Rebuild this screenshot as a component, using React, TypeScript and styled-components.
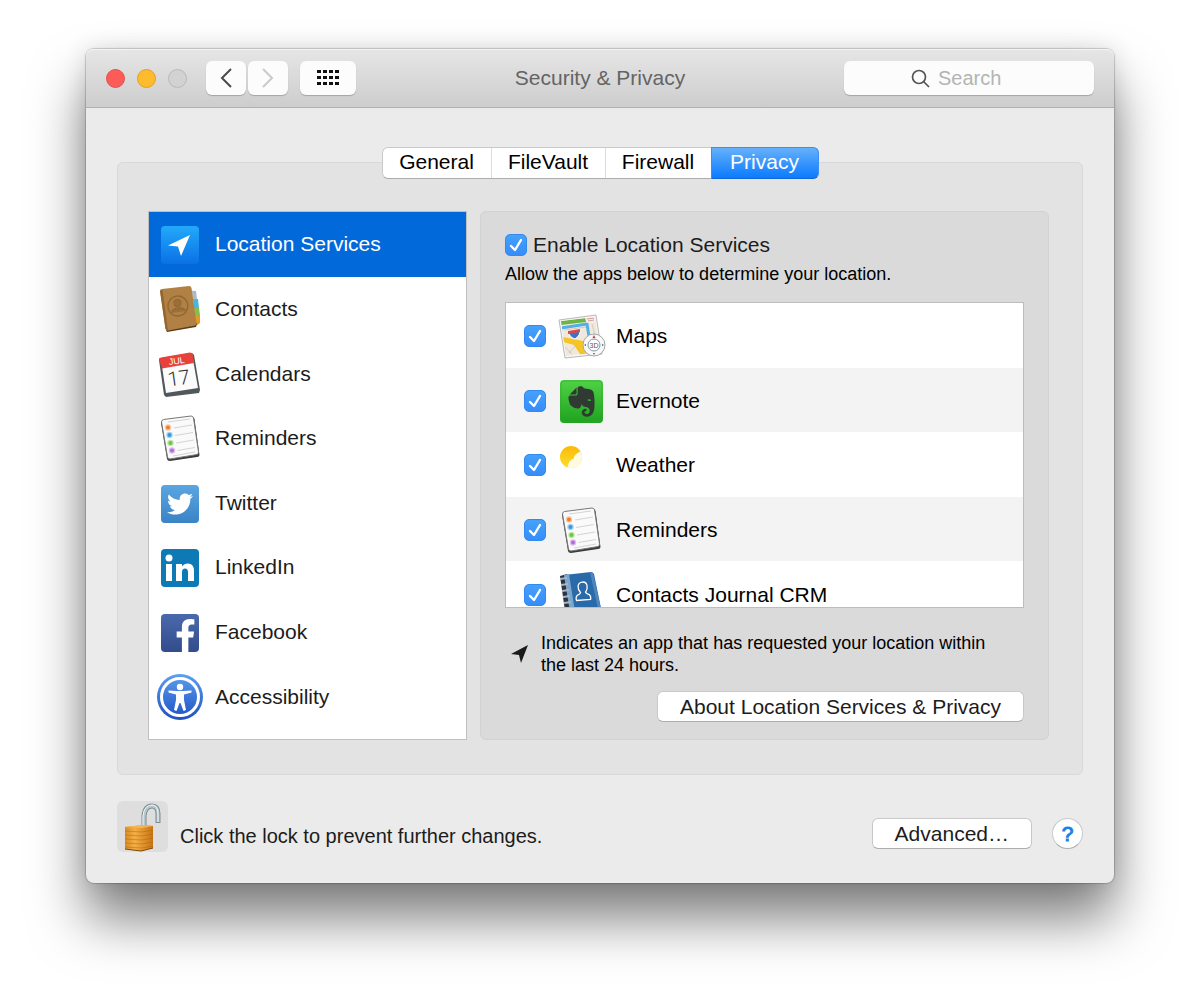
import React, { useState } from 'react';
import styled, { createGlobalStyle, css } from 'styled-components';
import { FaTwitter, FaLinkedinIn, FaFacebookF, FaEvernote } from 'react-icons/fa';

const GlobalStyle = createGlobalStyle`
  *, *::before, *::after { box-sizing: border-box; }
  body {
    margin: 0;
    background: #fff;
    color: #1c1c1c;
    font-family: "Liberation Sans", Arial, Helvetica, sans-serif;
    font-size: 21px;
    line-height: 24px;
  }
  button, input { font: inherit; color: inherit; }
`;

const Desktop = styled.main`
  padding: 49px 86px 123px;
`;

const Window = styled.section`
  border-radius: 8px;
  background: #ebebeb;
  box-shadow: 0 0 1px 1px rgba(0, 0, 0, 0.18), 0 36px 54px rgba(0, 0, 0, 0.5), 0 0 24px rgba(0, 0, 0, 0.12);
`;

const Toolbar = styled.header`
  display: grid;
  grid-template-columns: 1fr auto 1fr;
  align-items: center;
  height: 59px;
  padding: 0 20px;
  border-bottom: 1px solid #b0b0b0;
  border-radius: 8px 8px 0 0;
  background: linear-gradient(#e6e6e6, #cdcdcd);
  box-shadow: inset 0 1px 0 #f4f4f4;
`;

const ToolbarStart = styled.div`
  display: flex;
  align-items: center;
`;

const TrafficLights = styled.div`
  display: flex;
  gap: 12px;
  margin-right: 19px;
`;

const Light = styled.button<{ $fill: string; $edge: string }>`
  width: 19px;
  height: 19px;
  padding: 0;
  border: 1px solid ${(p) => p.$edge};
  border-radius: 50%;
  background: ${(p) => p.$fill};
`;

const ToolButton = styled.button<{ $wide?: boolean }>`
  display: grid;
  place-items: center;
  width: ${(p) => (p.$wide ? 56 : 40)}px;
  height: 34px;
  margin-left: ${(p) => (p.$wide ? 12 : 0)}px;
  padding: 0;
  border: 0;
  border-radius: 6px;
  background: #fcfcfc;
  box-shadow: 0 1px 1px rgba(0, 0, 0, 0.22);
`;

const NavButtons = styled.div`
  display: flex;
  gap: 2px;
`;

const Title = styled.h1`
  margin: 0;
  color: #646464;
  font-size: 21px;
  font-weight: 400;
`;

const SearchField = styled.label`
  display: flex;
  align-items: center;
  justify-self: end;
  gap: 8px;
  width: 250px;
  height: 34px;
  padding-left: 67px;
  border-radius: 6px;
  background: #fcfcfc;
  box-shadow: 0 1px 1px rgba(0, 0, 0, 0.22);
`;

const SearchInput = styled.input`
  flex: 1;
  min-width: 0;
  padding: 0;
  border: 0;
  outline: 0;
  background: none;
  font-size: 20px;
  &::placeholder { color: #b4b4b4; opacity: 1; }
`;

const Content = styled.div`
  padding: 39px 31px 31px;
`;

const raised = css`
  border: 1px solid #c9c9c9;
  border-bottom-color: #adadad;
  border-radius: 6px;
  background: #fff;
`;

const Tabs = styled.div`
  position: relative;
  display: flex;
  width: fit-content;
  height: 32px;
  margin: 0 auto -17px;
  ${raised}
`;

const Tab = styled.button<{ $width: number }>`
  width: ${(p) => p.$width}px;
  padding: 0 0 2px;
  border: 0;
  border-right: 1px solid #dcdcdc;
  background: none;
  color: #000;
  &[aria-selected='true'] {
    margin: -1px;
    border: 1px solid #3c8df5;
    border-bottom-color: #1267d8;
    border-radius: 0 6px 6px 0;
    background: linear-gradient(#66b0fb, #0a7bff);
    color: #fff;
  }
`;

const GroupBox = styled.div`
  display: grid;
  grid-template-columns: 319fr 569fr;
  gap: 13px;
  padding: 48px 33px 34px 30px;
  border: 1px solid #d8d8d8;
  border-radius: 6px;
  background: #e3e3e3;
`;

const Sidebar = styled.nav`
  display: grid;
  grid-template-rows: repeat(8, 1fr);
  padding-bottom: 10px;
  border: 1px solid #c0c0c0;
  background: #fff;
`;

const Category = styled.button`
  display: flex;
  align-items: center;
  gap: 12px;
  padding: 0 8px;
  border: 0;
  background: none;
  text-align: left;
  &[aria-current='true'] {
    background: #0269db;
    color: #fff;
  }
`;

const Panel = styled.div`
  display: flex;
  flex-direction: column;
  padding: 22px 24px 17px;
  border: 1px solid #d2d2d2;
  border-radius: 6px;
  background: #dadada;
`;

const EnableRow = styled.label`
  display: flex;
  align-items: center;
  gap: 6px;
  height: 22px;
`;

const Hint = styled.p`
  margin: 7px 0 17px;
  color: #000;
  font-size: 18px;
  line-height: 22px;
`;

const AppScroller = styled.div`
  height: 306px;
  overflow: hidden;
  border: 1px solid #bdbdbd;
  background: #fff;
`;

const AppList = styled.ul`
  display: grid;
  grid-template-rows: repeat(5, 1fr);
  height: 323px;
  margin: 0;
  padding: 0;
  list-style: none;
`;

const AppItem = styled.li`
  display: grid;
  color: #000;
  &:nth-child(even) { background: #f3f3f3; }
`;

const AppLabel = styled.label`
  display: flex;
  align-items: center;
  gap: 12px;
  padding: 2px 18px 0;
`;

const CheckFrame = styled.span`
  display: grid;
  flex: none;
  width: 22px;
  height: 22px;
  & > * { grid-area: 1 / 1; }
  svg { pointer-events: none; }
`;

const CheckInput = styled.input`
  appearance: none;
  width: 22px;
  height: 22px;
  margin: 0;
  border: 1px solid #b5b5b5;
  border-radius: 5px;
  background: #fff;
  &:checked {
    border-color: #3489ee;
    background: linear-gradient(#45a1fb, #368dfa);
  }
`;

const Note = styled.div`
  display: flex;
  align-items: center;
  gap: 12px;
  margin: 24px 0 15px;
  padding-left: 5px;
  color: #000;
  font-size: 18px;
  line-height: 22px;
  svg { flex: none; }
`;

const NoteText = styled.p`
  max-width: 465px;
  margin: 0;
`;

const PushButton = styled.button`
  height: 31px;
  padding: 0 22px;
  ${raised}
`;

const AboutButton = styled(PushButton)`
  align-self: flex-end;
`;

const Footer = styled.footer`
  display: flex;
  align-items: center;
  gap: 12px;
  margin-top: 26px;
`;

const LockButton = styled.button`
  width: 51px;
  height: 51px;
  padding: 0;
  border: 0;
  border-radius: 6px;
  background: #dedede;
  svg { display: block; }
`;

const LockText = styled.p`
  flex: 1;
  margin: 0;
  padding-top: 18px;
  font-size: 20px;
`;

const FooterActions = styled.div`
  display: flex;
  align-items: center;
  gap: 20px;
  padding-top: 14px;
`;

const HelpButton = styled.button`
  width: 31px;
  height: 31px;
  padding: 0;
  ${raised}
  border-radius: 50%;
  color: #1b7fe6;
  -webkit-text-stroke: 1px #1b7fe6;
`;

const Glyph46 = styled.svg`
  flex: none;
  overflow: visible;
`;

const Icon = ({ children }: { children: React.ReactNode }) => (
  <Glyph46 width="46" height="46" viewBox="0 0 46 46" aria-hidden="true">{children}</Glyph46>
);

const LocationIcon = () => (
  <Icon>
    <defs>
      <linearGradient id="loc" x2="0" y2="1"><stop stopColor="#22a9fa" /><stop offset="1" stopColor="#0a70e6" /></linearGradient>
    </defs>
    <rect x="4" y="5" width="38" height="38" rx="4" fill="url(#loc)" />
    <path d="M33 14 11 24.500 21 25.500 24 35Z" fill="#fff" />
  </Icon>
);

const ContactsIcon = () => (
  <Icon>
    <path d="M34 4 39 5 43 36 38 40Z" fill="#e2e2e2" />
    <path d="M35 5h4l1 9h-4z" fill="#a9bcc6" />
    <path d="M36 13h5l1 9h-5z" fill="#4db6d8" />
    <path d="M37 22h5l1 7h-5z" fill="#83bf4b" />
    <path d="M38 29h5v8l-4 3z" fill="#e39a25" />
    <path d="M9 44 40 37 39 41 10 46Z" fill="#5c3e17" />
    <path d="M3 4.500Q3 3 5 3L32 0Q34 0 34.500 2L39.500 37Q39.500 39 38 39.500L11 44.500Q9 44.500 8.500 43Z" fill="#b08044" />
    <path d="M3 5 8.500 43 11 44.500 5.500 4Z" fill="#93662f" />
    <g fill="none" stroke="#916631" transform="rotate(-7 21 21)">
      <circle cx="21" cy="20" r="10" strokeWidth="1.300" />
      <circle cx="21" cy="17" r="3.500" fill="#9b6f36" />
      <path d="M14 26Q15 22 21 22T28 26" fill="#9b6f36" />
    </g>
  </Icon>
);

const CalendarIcon = () => (
  <Icon>
    <path d="M2 9Q2 7 4 7L34 2Q36 2 37 4L43 39 42 42 9 46 7 44Z" fill="#50585c" />
    <path d="M4 9 35 3 41 37 9 42Z" fill="#fbfbfb" />
    <path d="M2 8Q2 7 4 6.500L33 1.500Q35 1.500 35.500 3L37 12 5 17.500Z" fill="#e8413c" />
    <text x="20" y="13" transform="rotate(-8 20 12)" textAnchor="middle" fontSize="9" fill="#fff">JUL</text>
    <text x="22" y="34" transform="rotate(-8 22 28)" textAnchor="middle" fontSize="20" fontFamily="Roboto, sans-serif" fontWeight="300" fill="#333">17</text>
  </Icon>
);

const RemindersIcon = () => (
  <Icon>
    <path d="M4 8Q4 6 6 6L35 2Q37 2 37.500 4L42.500 40Q42.500 42 40 42L13 46Q10.500 46 10 44Z" fill="#3b3b3b" />
    <path d="M4.500 7Q4.500 5 6.500 4.500L34 1Q36 1 36.500 3L41.500 37Q41.500 39 40 39.500L13 44Q11 44 10.500 42Z" fill="#fafafa" stroke="#777" />
    <g stroke="#d4d4d4">
      <path d="M11 7 33 4M17 13 35 10M18 20.500 36 17.500M19 28 37 25M20.500 35.500 38 32.500M16 41 38 37" />
    </g>
    <g strokeWidth="2.500" strokeOpacity=".4">
      <circle cx="11" cy="12.500" r="2" fill="#ef7f2d" stroke="#ef7f2d" />
      <circle cx="12.500" cy="20" r="2" fill="#2f9be0" stroke="#2f9be0" />
      <circle cx="13.500" cy="28" r="2" fill="#6cc83d" stroke="#6cc83d" />
      <circle cx="15" cy="35.500" r="2" fill="#b56bdc" stroke="#b56bdc" />
    </g>
  </Icon>
);

const TwitterIcon = () => (
  <Icon>
    <defs>
      <linearGradient id="tw" x2="0" y2="1"><stop stopColor="#5aa6e0" /><stop offset="1" stopColor="#3a83c6" /></linearGradient>
    </defs>
    <rect x="4" y="5" width="38" height="38" rx="4" fill="url(#tw)" />
    <FaTwitter x="10" y="11" size={26} color="#fff" />
  </Icon>
);

const LinkedInIcon = () => (
  <Icon>
    <rect x="4" y="5" width="38" height="38" rx="4" fill="#0d7ab5" />
    <g fill="#fff">
      <circle cx="12" cy="14" r="3.500" />
      <path d="M9 20H15V37H9ZM19 20H25V22.500Q27 19.500 31 19.500 37 19.500 37 27V37H31V28Q31 24.500 28 24.500 25 24.500 25 28V37H19Z" />
    </g>
  </Icon>
);

const FacebookIcon = () => (
  <Icon>
    <defs>
      <linearGradient id="fb" x2="0" y2="1"><stop stopColor="#4a69ad" /><stop offset="1" stopColor="#324c8c" /></linearGradient>
    </defs>
    <rect x="4" y="5" width="38" height="38" rx="4" fill="url(#fb)" />
    <FaFacebookF x="12" y="10" size={33} color="#fff" />
  </Icon>
);

const AccessibilityIcon = () => (
  <Icon>
    <defs>
      <linearGradient id="ax" x2="0" y2="1"><stop stopColor="#5c9fef" /><stop offset="1" stopColor="#1f4fc4" /></linearGradient>
    </defs>
    <circle cx="23" cy="23" r="23" fill="url(#ax)" />
    <circle cx="23" cy="23" r="18.500" fill="none" stroke="#fff" strokeWidth="3" />
    <circle cx="23" cy="13" r="3.200" fill="#fff" />
    <path d="M11.500 16.500 20 17H26L34.500 16.500V18.500L27 20.500V26L29 36 26.500 37 23.500 29H22.500L19.500 37 17 36 19 26V20.500L11.500 18.500Z" fill="#fff" />
  </Icon>
);

const MapsIcon = () => (
  <Icon>
    <defs>
      <clipPath id="sheet"><path d="M3 8 37 4 42 39 8 43Z" /></clipPath>
    </defs>
    <path d="M1 7 38 2 44 41 7 45Z" fill="#f7f7f7" stroke="#b9b9b9" />
    <g clipPath="url(#sheet)">
      <path d="M0 0H46V46H0Z" fill="#efe9dc" />
      <path d="M2 8 27 5 28 9 3 12Z" fill="#69b645" />
      <path d="M3 15 29 11 32 30" fill="none" stroke="#56aee8" strokeWidth="3" />
      <path d="M5 24 25 28 31 44H24L16 32 5 29Z" fill="#f6c524" />
      <path d="M7 34 14 41M11 40 17 33M7 17 28 14M34 11 38 26" stroke="#d2cabb" />
      <path d="M28 4 37 3 38 9 29 10Z" fill="#f4f0ea" />
      <path d="M29 6 36 5M30 8 36 7" stroke="#da9a96" />
    </g>
    <path d="M10 18 22 16Q23 22 17 26 11 24 10 18Z" fill="#3d73c6" stroke="#fff" />
    <path d="M10 18 22 16V19L10 21Z" fill="#d94a45" />
    <circle cx="36" cy="32" r="11" fill="#f8f8f8" stroke="#a5a5a5" />
    <circle cx="36" cy="32" r="6" fill="#fff" stroke="#8497a5" />
    <text x="36" y="35" textAnchor="middle" fontSize="7" fill="#555">3D</text>
    <path d="M36 22 37.500 25H34.500Z" fill="#d63a35" />
    <path d="M26 32 28 31V33ZM46 32 44 31V33ZM36 42 35 40H37Z" fill="#555" />
  </Icon>
);

const EvernoteIcon = () => (
  <Icon>
    <defs>
      <linearGradient id="ev" x2="0" y2="1"><stop stopColor="#4fd246" /><stop offset="1" stopColor="#1fa31f" /></linearGradient>
    </defs>
    <rect x="2" y="2" width="43" height="43" rx="4" fill="url(#ev)" />
    <rect x="3" y="3" width="41" height="41" rx="3" fill="none" stroke="#35a52e" strokeOpacity=".6" />
    <FaEvernote x="6" y="6" size={35} color="#303a33" />
  </Icon>
);

const WeatherIcon = () => (
  <Icon>
    <defs>
      <linearGradient id="sun" x2="0" y2="1"><stop stopColor="#fcb90a" /><stop offset="1" stopColor="#fbe02a" /></linearGradient>
      <clipPath id="disc"><circle cx="13" cy="15" r="11" /></clipPath>
    </defs>
    <circle cx="13" cy="15" r="11" fill="url(#sun)" />
    <path d="M26 10Q17 10 16 17 10 18 10 28H28V10Z" fill="#fffbe0" clipPath="url(#disc)" stroke="#fffbe0" />
  </Icon>
);

const JournalIcon = () => (
  <Icon>
    <path d="M2 4 9 2 15 46H8Z" fill="#2b3440" />
    <path d="M6 3 33 0Q35 0 36 2L45 46H13Z" fill="#2a6aa9" />
    <path d="M6 3 11 2 18 46H13Z" fill="#7ba7ce" />
    <path d="M32 0 35 1 45 46H42Z" fill="#4f86bd" />
    <path d="M2 7 9 6M3 13 10 12M4 19 11 18M5 25 12 24M6 31 13 30M7 37 14 36" stroke="#aab6c1" strokeWidth="2" />
    <g fill="none" stroke="#fff" strokeWidth="1.300" transform="rotate(-4 25 20)">
      <path d="M22.500 20.500Q20 17 20.500 14 21 10 25 10T29.500 14Q30 17 27.500 20.500 28 22 31 23 33 25 32 28H18Q17 25 19 23 22 22 22.500 20.500Z" />
    </g>
  </Icon>
);

const LockIcon = () => (
  <svg width="51" height="51" viewBox="0 0 51 51" aria-hidden="true">
    <defs>
      <linearGradient id="brass"><stop stopColor="#d98a22" /><stop offset=".35" stopColor="#f4ae45" /><stop offset="1" stopColor="#c87511" /></linearGradient>
    </defs>
    <path d="M27 26V15Q28 5 35 5 41 5 41 13V22" fill="none" stroke="#7d8b90" strokeWidth="5" />
    <path d="M27 26V15Q28 5 35 5 41 5 41 13V21" fill="none" stroke="#b9c8cc" strokeWidth="3" />
    <path d="M26 26V15Q27 4 35 4 41 4 41 13V21" fill="none" stroke="#eef4f5" />
    <path d="M8 26 26 24 36 25V47L24 50 8 48Z" fill="url(#brass)" />
    <path d="M8 26 26 24 36 25 25 27Z" fill="#f2b659" />
    <path d="M8 30 25 31 36 29M8 34 25 35 36 33M8 38 25 39 36 37M8 42 25 43 36 41M8 46 25 47 36 45" fill="none" stroke="#a9600d" strokeOpacity=".45" />
    <path d="M8 48 24 50 36 47" fill="none" stroke="#804605" />
  </svg>
);

const Check = ({ on, toggle }: { on: boolean; toggle: () => void }) => (
  <CheckFrame>
    <CheckInput type="checkbox" checked={on} onChange={toggle} />
    {on && (
      <svg width="22" height="22" viewBox="0 0 22 22" aria-hidden="true">
        <path d="M6 12 10 16 16 6" fill="none" stroke="#fff" strokeWidth="2.400" strokeLinecap="round" strokeLinejoin="round" />
      </svg>
    )}
  </CheckFrame>
);

const tabs = [
  { name: 'General', width: 109 },
  { name: 'FileVault', width: 114 },
  { name: 'Firewall', width: 106 },
  { name: 'Privacy', width: 108 },
];

const categories = [
  { name: 'Location Services', Glyph: LocationIcon },
  { name: 'Contacts', Glyph: ContactsIcon },
  { name: 'Calendars', Glyph: CalendarIcon },
  { name: 'Reminders', Glyph: RemindersIcon },
  { name: 'Twitter', Glyph: TwitterIcon },
  { name: 'LinkedIn', Glyph: LinkedInIcon },
  { name: 'Facebook', Glyph: FacebookIcon },
  { name: 'Accessibility', Glyph: AccessibilityIcon },
];

const apps = [
  { name: 'Maps', Glyph: MapsIcon },
  { name: 'Evernote', Glyph: EvernoteIcon },
  { name: 'Weather', Glyph: WeatherIcon },
  { name: 'Reminders', Glyph: RemindersIcon },
  { name: 'Contacts Journal CRM', Glyph: JournalIcon },
];

export default function App() {
  const [category, setCategory] = useState('Location Services');
  const [enabled, setEnabled] = useState(true);
  const [denied, setDenied] = useState<string[]>([]);

  const toggleApp = (name: string) =>
    setDenied((list) => (list.includes(name) ? list.filter((n) => n !== name) : [...list, name]));

  return (
    <Desktop>
      <GlobalStyle />
      <Window>
        <Toolbar>
          <ToolbarStart>
            <TrafficLights>
              <Light $fill="#fc5b57" $edge="#e2504b" aria-label="Close" />
              <Light $fill="#fdbc2e" $edge="#dfa023" aria-label="Minimize" />
              <Light $fill="#d2d2d2" $edge="#b9b9b9" aria-label="Zoom" disabled />
            </TrafficLights>
            <NavButtons>
              <ToolButton aria-label="Back">
                <svg width="12" height="20" viewBox="0 0 12 20"><path d="M11 1 2 10 11 19" fill="none" stroke="#4a4a4a" strokeWidth="2" /></svg>
              </ToolButton>
              <ToolButton aria-label="Forward" disabled>
                <svg width="12" height="20" viewBox="0 0 12 20"><path d="M1 1 10 10 1 19" fill="none" stroke="#cacaca" strokeWidth="2" /></svg>
              </ToolButton>
            </NavButtons>
            <ToolButton $wide aria-label="Show All">
              <svg width="22" height="16" viewBox="0 0 22 16">
                {[0, 6, 12].map((y) => [0, 6, 12, 18].map((x) => <rect key={`${x}-${y}`} x={x} y={y} width="4" height="3" fill="#111" />))}
              </svg>
            </ToolButton>
          </ToolbarStart>
          <Title>Security &amp; Privacy</Title>
          <SearchField>
            <svg width="19" height="19" viewBox="0 0 19 19" fill="none" stroke="#555" strokeWidth="1.700" aria-hidden="true">
              <circle cx="8" cy="8" r="6.500" />
              <path d="M12.500 12.500 18 18" />
            </svg>
            <SearchInput type="text" placeholder="Search" aria-label="Search" />
          </SearchField>
        </Toolbar>

        <Content>
          <Tabs role="tablist">
            {tabs.map((t) => (
              <Tab key={t.name} role="tab" $width={t.width} aria-selected={t.name === 'Privacy'}>{t.name}</Tab>
            ))}
          </Tabs>

          <GroupBox>
            <Sidebar aria-label="Privacy categories">
              {categories.map(({ name, Glyph }) => (
                <Category key={name} aria-current={name === category} onClick={() => setCategory(name)}>
                  <Glyph />
                  {name}
                </Category>
              ))}
            </Sidebar>

            <Panel>
              <EnableRow>
                <Check on={enabled} toggle={() => setEnabled(!enabled)} />
                Enable Location Services
              </EnableRow>
              <Hint>Allow the apps below to determine your location.</Hint>
              <AppScroller>
                <AppList>
                  {apps.map(({ name, Glyph }) => (
                    <AppItem key={name}>
                      <AppLabel>
                        <Check on={!denied.includes(name)} toggle={() => toggleApp(name)} />
                        <Glyph />
                        {name}
                      </AppLabel>
                    </AppItem>
                  ))}
                </AppList>
              </AppScroller>
              <Note>
                <svg width="19" height="20" viewBox="0 0 19 20" aria-hidden="true"><path d="M18 1 1 10 9 11 11 19Z" fill="#1a1a1a" /></svg>
                <NoteText>Indicates an app that has requested your location within the last 24 hours.</NoteText>
              </Note>
              <AboutButton>About Location Services &amp; Privacy</AboutButton>
            </Panel>
          </GroupBox>

          <Footer>
            <LockButton aria-label="Lock settings"><LockIcon /></LockButton>
            <LockText>Click the lock to prevent further changes.</LockText>
            <FooterActions>
              <PushButton>Advanced…</PushButton>
              <HelpButton aria-label="Help">?</HelpButton>
            </FooterActions>
          </Footer>
        </Content>
      </Window>
    </Desktop>
  );
}
